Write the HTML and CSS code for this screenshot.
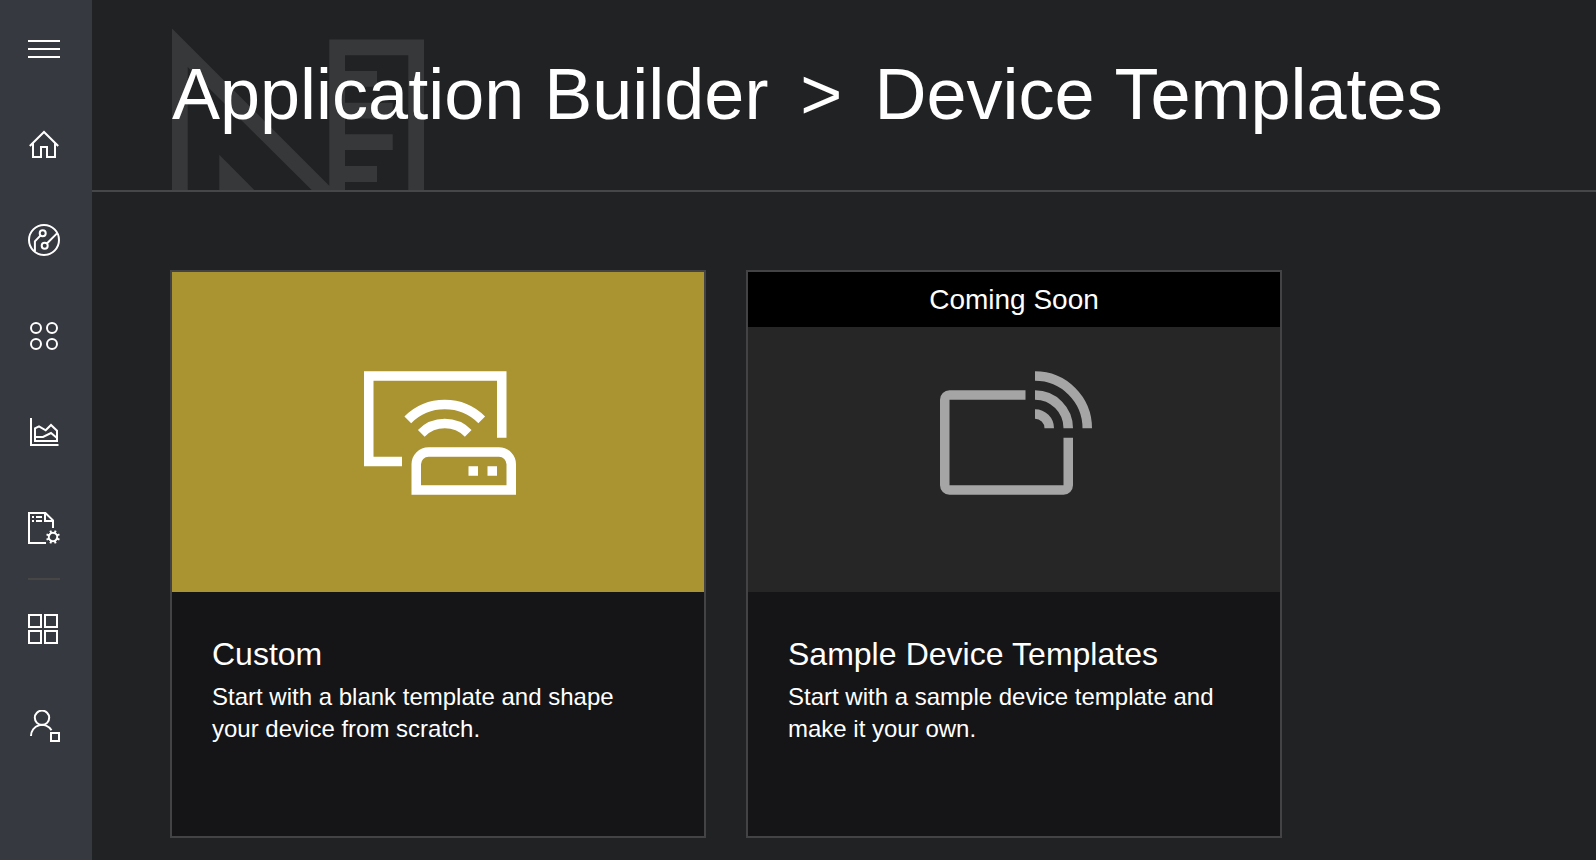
FILE: index.html
```html
<!DOCTYPE html>
<html lang="en">
<head>
<meta charset="utf-8">
<title>Device Templates</title>
<link rel="stylesheet" href="styles.css">
</head>
<body>
<div class="app">
  <nav class="sidebar">
    <a class="nav-item"><svg class="icon" viewBox="0 0 32 32"><path d="M0 9H32M0 17H32M0 25H32"/></svg></a>
    <a class="nav-item"><svg class="icon" viewBox="0 0 32 32"><path d="M1.8 18 16 4 30.2 18M5 15.5V29H13V19H19V29H27V15.5"/></svg></a>
    <a class="nav-item"><svg class="icon" viewBox="0 0 32 32"><circle cx="16" cy="16" r="15"/><circle cx="14.7" cy="9.3" r="3"/><circle cx="16.7" cy="21.7" r="3"/><path d="M12.6 11.4 6.9 17.3V27.5M18.9 19.5 29 9.4"/></svg></a>
    <a class="nav-item"><svg class="icon" viewBox="0 0 32 32"><circle cx="8" cy="8" r="5"/><circle cx="24" cy="8" r="5"/><circle cx="8" cy="24" r="5"/><circle cx="24" cy="24" r="5"/></svg></a>
    <a class="nav-item"><svg class="icon" viewBox="0 0 32 32"><path d="M3 2V29H30.5M7 25V12.4L11 10.4 17.7 14.3 23 9 29 14.7V25ZM7 21H15L23 17 29 22"/></svg></a>
    <a class="nav-item"><svg class="icon" viewBox="0 0 32 32"><path d="M18 31H1V1H17.4L25 8.4V16M17 1V9H25M4 5H6M4 9H6M8 5H14M8 9H14"/><g transform="rotate(22.5 25 25)"><circle cx="25" cy="25" r="4.2"/><path d="M25 18V21M25 29V32M18 25H21M29 25H32M20.05 20.05 22 22M28 28 29.95 29.95M29.95 20.05 28 22M22 28 20.05 29.95"/></g></svg></a>
    <hr class="divider">
    <a class="nav-item"><svg class="icon" viewBox="0 0 32 32"><path d="M1 1H13V13H1ZM17 1H29V13H17ZM1 17H13V29H1ZM17 17H29V29H17Z"/></svg></a>
    <a class="nav-item"><svg class="icon" viewBox="0 0 32 32"><circle cx="14" cy="7.8" r="7.2"/><path d="M3 26A11 11 0 0 1 23.5 20.3M23 23H31V31H23Z"/></svg></a>
  </nav>
  <main class="main">
    <header class="header">
      <svg class="watermark" viewBox="0 0 252 190"><path fill-rule="evenodd" d="M0 28.5 157.3 185.7V39.5H252V190H236.3V55.3H173V71H205V86.7H173V102.7H220.7V118.5H173V134.3H220.7V150H173V166H205V182H173V190H139.7L15.7 67V190H0ZM47.3 154.7 82.3 190H47.3Z"/></svg>
      <h1 class="title"><span>Application Builder</span><span class="separator">&gt;</span><span class="page-name">Device Templates</span></h1>
    </header>
    <section class="cards">
      <article class="card">
        <div class="card-image gold">
          <svg class="card-icon" viewBox="0 0 16 13"><path d="M4 9.5H.5V.5H14.5V7M5.5 12.5V9.8A1.3 1.3 0 0 1 6.8 8.5H14.2A1.3 1.3 0 0 1 15.5 9.8V12.5ZM4.61 5.11A5.5 5.5 0 0 1 12.39 5.11M6.03 6.53A3.5 3.5 0 0 1 10.97 6.53M11 10.5H12M13 10.5H14"/></svg>
        </div>
        <div class="card-body"><h2 class="card-title">Custom</h2><p class="card-text">Start with a blank template and shape your device from scratch.</p></div>
      </article>
      <article class="card">
        <div class="card-image muted">
          <div class="banner">Coming Soon</div>
          <svg class="card-icon" viewBox="0 0 16 13"><path class="solid" d="M9 2H1A1 1 0 0 0 0 3V12A1 1 0 0 0 1 13H13A1 1 0 0 0 14 12V7H13V12H1V3H9Z"/><path d="M10 4.5A1.5 1.5 0 0 1 11.5 6M10 2.5A3.5 3.5 0 0 1 13.5 6M10 .5A5.5 5.5 0 0 1 15.5 6"/></svg>
        </div>
        <div class="card-body"><h2 class="card-title">Sample Device Templates</h2><p class="card-text">Start with a sample device template and make it your own.</p></div>
      </article>
    </section>
  </main>
</div>
</body>
</html>
```
FILE: styles.css
```css
* { box-sizing: border-box; }
body {
  margin: 0;
  background: #212224;
  color: #fff;
  font-family: "Liberation Sans", Arial, sans-serif;
  overflow: hidden;
}
.app { display: flex; height: 860px; }
.sidebar { width: 92px; flex: none; background: #373940; }
.nav-item { display: flex; height: 96px; padding: 32px 28px; }
.icon { width: 32px; height: 32px; fill: none; stroke: #fff; stroke-width: 2; }
.divider { width: 32px; height: 2px; margin: 2px 28px; border: 0; background: #464646; }
.main { flex: 1; min-width: 0; }
.header {
  position: relative;
  height: 192px;
  padding: 53px 80px 0;
  border-bottom: 2px solid #464748;
}
.watermark { position: absolute; left: 80px; top: 0; width: 252px; height: 190px; fill: #373839; }
.title {
  position: relative;
  display: flex;
  margin: 0;
  font-size: 72px;
  line-height: 82px;
  font-weight: 400;
  white-space: nowrap;
}
.separator { margin: 0 32px; }
.page-name { word-spacing: 1.3px; }
.cards { display: flex; gap: 40px; padding: 78px 78px 0; }
.card { width: 536px; height: 568px; border: 2px solid #434345; background: #151517; }
.card-image { position: relative; height: 320px; padding: 99px 0 0 192px; }
.gold { background: #a99431; }
.muted { background: #262626; }
.card-icon { display: block; width: 152px; height: 124px; fill: none; stroke: #fff; stroke-width: 1; }
.muted .card-icon { stroke: #a5a5a5; }
.muted .solid { fill: #a5a5a5; stroke: none; }
.banner {
  position: absolute;
  top: 0;
  left: 0;
  right: 0;
  height: 55px;
  background: #000;
  font-size: 28px;
  line-height: 55px;
  text-align: center;
}
.card-body { padding: 40px; }
.card-title { margin: 0; font-size: 32px; line-height: 44px; font-weight: 400; word-spacing: 0.3px; }
.card-text { margin: 5px 0 0; font-size: 24px; line-height: 32px; }
```
